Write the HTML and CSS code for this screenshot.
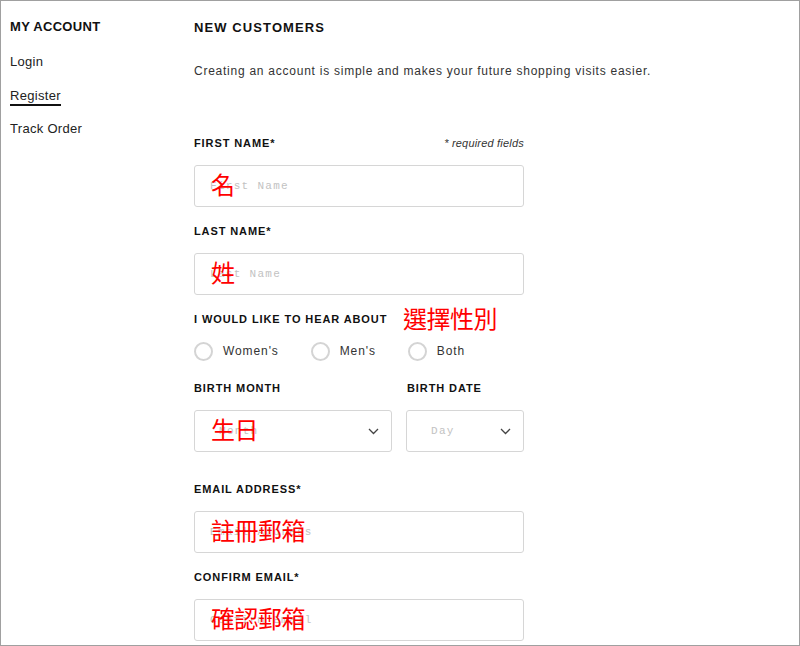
FILE: index.html
```html
<!DOCTYPE html>
<html lang="zh-Hant">
<head>
    <meta charset="UTF-8">
    <meta name="viewport" content="width=device-width, initial-scale=1.0">
    <title>Register</title>
    <link rel="stylesheet" href="styles.css">
</head>
<body>

    <div class="frame">
        <div class="sidebar">
            <h2 class="side-title">MY ACCOUNT</h2>
            <a class="side-link" href="#">Login</a>
            <a class="side-link active" href="#">Register</a>
            <a class="side-link" href="#">Track Order</a>
        </div>

        <div class="main">
            <h1 class="main-title">NEW CUSTOMERS</h1>
            <p class="intro">Creating an account is simple and makes your future shopping visits easier.</p>

            <form class="reg-form">
                <div class="field">
                    <div class="label-row">
                        <label class="label">FIRST NAME*</label>
                        <span class="required">* required fields</span>
                    </div>
                    <div class="input-wrap">
                        <input class="text-input" type="text" placeholder="First Name">
                        <span class="note">名</span>
                    </div>
                </div>

                <div class="field">
                    <label class="label">LAST NAME*</label>
                    <div class="input-wrap">
                        <input class="text-input" type="text" placeholder="Last Name">
                        <span class="note">姓</span>
                    </div>
                </div>

                <div class="field">
                    <div class="label-row note-row">
                        <label class="label">I WOULD LIKE TO HEAR ABOUT</label>
                        <span class="note note-inline">選擇性別</span>
                    </div>
                    <div class="radios">
                        <label class="radio"><span class="circle"></span>Women's</label>
                        <label class="radio"><span class="circle"></span>Men's</label>
                        <label class="radio"><span class="circle"></span>Both</label>
                    </div>
                </div>

                <div class="birth-row">
                    <div class="birth-month">
                        <label class="label">BIRTH MONTH</label>
                        <div class="input-wrap">
                            <select class="select">
                                <option>Month</option>
                            </select>
                            <svg class="chevron" width="11" height="7" viewBox="0 0 11 7"><polyline points="1,1 5.5,5.5 10,1" fill="none" stroke="#444" stroke-width="1.3"/></svg>
                            <span class="note">生日</span>
                        </div>
                    </div>
                    <div class="birth-date">
                        <label class="label">BIRTH DATE</label>
                        <div class="input-wrap">
                            <select class="select">
                                <option>Day</option>
                            </select>
                            <svg class="chevron" width="11" height="7" viewBox="0 0 11 7"><polyline points="1,1 5.5,5.5 10,1" fill="none" stroke="#444" stroke-width="1.3"/></svg>
                        </div>
                    </div>
                </div>

                <div class="field">
                    <label class="label">EMAIL ADDRESS*</label>
                    <div class="input-wrap">
                        <input class="text-input" type="text" placeholder="Email Address">
                        <span class="note">註冊郵箱</span>
                    </div>
                </div>

                <div class="field">
                    <label class="label">CONFIRM EMAIL*</label>
                    <div class="input-wrap">
                        <input class="text-input" type="text" placeholder="Confirm Email">
                        <span class="note">確認郵箱</span>
                    </div>
                </div>
            </form>
        </div>
    </div>

</body>
</html>
```

FILE: styles.css
```css
body {
    margin: 0;
    font-family: "Liberation Sans", Arial, sans-serif;
    color: #222;
    background: #fff;
}
.frame {
    display: flex;
    height: 646px;
    box-sizing: border-box;
    border: 1px solid #a0a0a0;
    overflow: hidden;
}
.sidebar {
    width: 193px;
    box-sizing: border-box;
    padding: 18px 0 0 9px;
}
.side-title {
    margin: 0 0 19px;
    font-size: 13px;
    line-height: 16px;
    font-weight: bold;
    letter-spacing: 0.3px;
    color: #111;
}
.side-link {
    display: block;
    width: fit-content;
    margin-bottom: 18px;
    font-size: 13px;
    line-height: 16px;
    letter-spacing: 0.3px;
    color: #222;
    text-decoration: none;
}
.side-link.active {
    border-bottom: 2px solid #111;
    margin-bottom: 15px;
}
.main {
    width: 470px;
    padding-top: 19px;
}
.main-title {
    margin: 0 0 27px;
    font-size: 13px;
    line-height: 16px;
    font-weight: bold;
    letter-spacing: 1.1px;
    color: #111;
}
.intro {
    margin: 0 0 57px;
    font-size: 12px;
    line-height: 16px;
    letter-spacing: 0.75px;
    color: #333;
}
.reg-form {
    width: 330px;
}
.field {
    margin-bottom: 17px;
}
.label-row {
    display: flex;
    justify-content: space-between;
    align-items: baseline;
    margin-bottom: 15px;
}
.label-row .label {
    margin-bottom: 0;
}
.note-row {
    position: relative;
    justify-content: flex-start;
}
.label {
    display: block;
    margin-bottom: 15px;
    font-size: 11px;
    line-height: 14px;
    font-weight: bold;
    letter-spacing: 0.9px;
    color: #111;
}
.required {
    font-size: 11px;
    font-style: italic;
    letter-spacing: 0.2px;
    color: #333;
}
.input-wrap {
    position: relative;
}
.text-input, .select {
    display: block;
    width: 100%;
    height: 42px;
    box-sizing: border-box;
    border: 1px solid #d6d6d6;
    border-radius: 3px;
    padding: 0 0 0 15px;
    font-family: "Liberation Mono", "Courier New", monospace;
    font-size: 11px;
    letter-spacing: 1.3px;
    color: #c2c2c2;
    background: #fff;
    outline: none;
}
.text-input::placeholder {
    color: #c2c2c2;
}
.select {
    appearance: none;
    -webkit-appearance: none;
    padding-left: 24px;
}
.chevron {
    position: absolute;
    right: 13px;
    top: 18px;
}
.note {
    position: absolute;
    left: 17px;
    top: calc(50% - 2px);
    transform: translateY(-50%);
    font-family: "Noto Sans CJK TC", "Noto Sans CJK SC", sans-serif;
    font-size: 24px;
    line-height: 1;
    color: #ff0000;
    letter-spacing: -0.5px;
    pointer-events: none;
}
.note-inline {
    left: 209px;
    top: 45%;
}
.radios {
    display: flex;
    gap: 32px;
    height: 20px;
    align-items: center;
}
.radio {
    display: flex;
    align-items: center;
    font-size: 12px;
    letter-spacing: 0.9px;
    color: #333;
}
.circle {
    width: 19px;
    height: 19px;
    box-sizing: border-box;
    border: 2px solid #d4d4d4;
    border-radius: 50%;
    margin-right: 10px;
}
.birth-row {
    display: flex;
    gap: 14px;
    margin-top: 20px;
    margin-bottom: 30px;
}
.birth-month {
    width: 198px;
}
.birth-date {
    width: 118px;
}
.birth-date .label {
    margin-left: 1px;
}
```
